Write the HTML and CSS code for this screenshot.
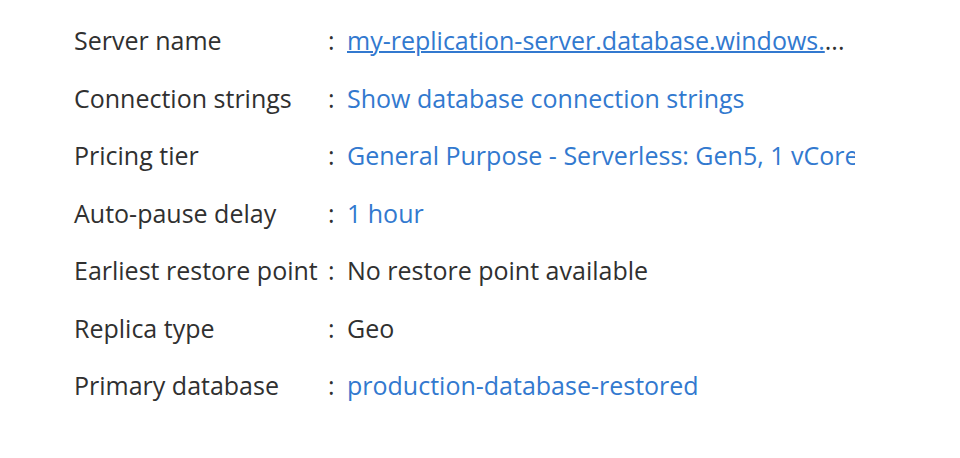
FILE: index.html
```html
<!DOCTYPE html>
<html lang="en">
<head>
<meta charset="utf-8">
<title>Database essentials</title>
<link rel="stylesheet" href="styles.css">
</head>
<body>
<dl class="properties">
<div class="row"><dt>Server name</dt><dd><a class="underlined" href="#">my-replication-server.database.windows.</a>...</dd></div>
<div class="row"><dt>Connection strings</dt><dd><a href="#">Show database connection strings</a></dd></div>
<div class="row"><dt>Pricing tier</dt><dd><a href="#">General Purpose - Serverless: Gen5, 1 vCore</a></dd></div>
<div class="row"><dt>Auto-pause delay</dt><dd><a href="#">1 hour</a></dd></div>
<div class="row"><dt>Earliest restore point</dt><dd>No restore point available</dd></div>
<div class="row"><dt>Replica type</dt><dd>Geo</dd></div>
<div class="row"><dt>Primary database</dt><dd><a href="#">production-database-restored</a></dd></div>
</dl>
</body>
</html>
```
FILE: styles.css
```css
body {
  margin: 0;
  background: #fff;
  color: #303030;
  font: 25px/32px "Open Sans", "Noto Sans", sans-serif;
}
.properties {
  box-sizing: border-box;
  display: grid;
  align-content: space-between;
  row-gap: 24px;
  min-height: 100vh;
  margin: 0;
  padding: 24px 105px 57px 74px;
}
.row {
  display: grid;
  grid-template-columns: 254px minmax(0, 1fr);
  white-space: nowrap;
}
dd {
  display: flex;
  margin: 0;
  overflow: hidden;
}
dd::before {
  content: ":";
  flex: 0 0 19px;
}
a {
  color: #3279cf;
  text-decoration: none;
}
.underlined {
  text-decoration: underline 2px;
}
```
